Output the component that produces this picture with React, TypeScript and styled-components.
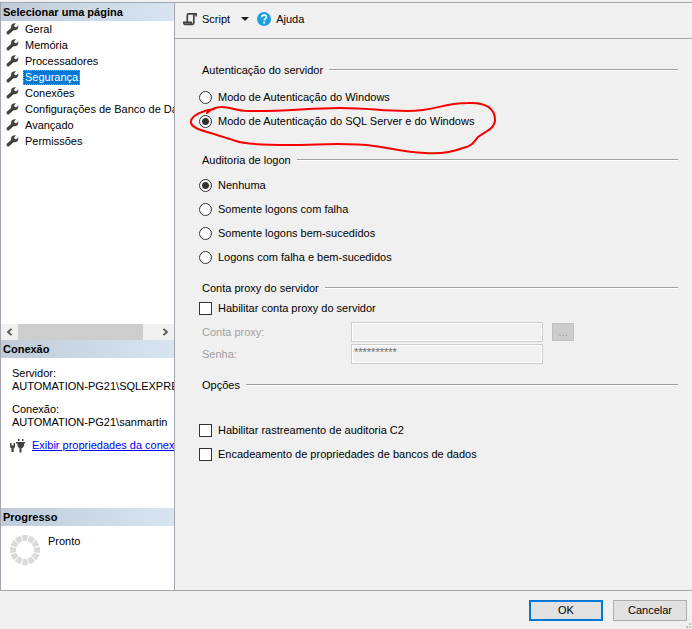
import React, { useState } from "react";
import styled, { createGlobalStyle } from "styled-components";

const Global = createGlobalStyle`
  *, *::before, *::after { box-sizing: border-box; }
  body { margin: 0; background: #f0f0f0; }
  body, button, input { font: 11px/13px "Liberation Sans", Arial, sans-serif; color: #000; }
`;

const Dialog = styled.div`
  display: flex;
  flex-direction: column;
  min-height: 100vh;
  padding-top: 2px;
`;
const Body = styled.div`
  flex: 1;
  display: grid;
  grid-template-columns: 175px minmax(0, 1fr);
  border: 1px solid #a5a5ad;
  border-width: 1px 0;
`;
const Sidebar = styled.aside`
  display: flex;
  flex-direction: column;
  min-width: 0;
  background: #fff;
  border: 1px solid #a5a5ad;
  border-width: 0 1px;
  overflow: hidden;
`;
const Panel = styled.section<{ $height?: number }>`
  display: flex;
  flex-direction: column;
  ${(p) => (p.$height ? `min-height: ${p.$height}px;` : "flex: 1;")}
`;
const PanelTitle = styled.h2`
  margin: 0;
  padding: 0 2px;
  font-size: 11px;
  line-height: 18px;
  font-weight: bold;
  background: linear-gradient(90deg, #bfcbd9, #d7e5f3);
`;
const PageList = styled.ul`
  flex: 1;
  margin: 0;
  padding: 0;
  list-style: none;
`;
const PageItem = styled.li`
  display: flex;
  align-items: center;
  gap: 4px;
  height: 16px;
  padding-left: 5px;
  svg { flex: none; }
`;
const PageButton = styled.button<{ $active: boolean }>`
  height: 15px;
  padding: 0 1px;
  border: 1px ${(p) => (p.$active ? "dotted #ff8728" : "solid transparent")};
  background: ${(p) => (p.$active ? "#0078d7" : "transparent")};
  color: ${(p) => (p.$active ? "#fff" : "#000")};
  white-space: nowrap;
`;
const ScrollBar = styled.div`
  display: grid;
  grid-template-columns: 17px 1fr 17px;
  height: 16px;
  background: #f0f0f0;
`;
const ScrollButton = styled.button`
  display: grid;
  place-items: center;
  padding: 0;
  border: 0;
  background: none;
`;
const Thumb = styled.div`
  width: 90%;
  background: #cdcdcd;
`;
const Details = styled.dl`
  margin: 0;
  padding: 9px 0 0 11px;
  white-space: nowrap;
  dt { margin-top: 10px; }
  dt:first-child { margin-top: 0; }
  dd { margin: 0; }
`;
const LinkRow = styled.div`
  display: flex;
  align-items: center;
  gap: 7px;
  padding: 9px 0 0 9px;
  white-space: nowrap;
  svg { flex: none; }
  a { color: #00f; }
`;
const Status = styled.div`
  display: flex;
  gap: 8px;
  padding: 9px 0 0 9px;
`;
const Main = styled.main`
  min-width: 0;
`;
const Toolbar = styled.div`
  display: flex;
  align-items: center;
  height: 36px;
  padding: 0 8px 3px;
  border-bottom: 1px solid #a5a5ad;
`;
const ToolButton = styled.button`
  display: flex;
  align-items: center;
  gap: 5px;
  padding: 0;
  border: 0;
  background: none;
  & + & { margin-left: 8px; }
  span + svg { margin-left: 6px; }
`;
const Form = styled.form`
  padding: 23px 14px 24px 24px;
`;
const Group = styled.fieldset<{ $before?: number; $after?: number }>`
  min-width: 0;
  margin: ${(p) => p.$before ?? 0}px 0 0;
  padding: 0;
  border: 0;
  legend { margin-bottom: ${(p) => p.$after ?? 0}px; }
`;
const Legend = styled.legend`
  display: flex;
  align-items: center;
  gap: 6px;
  width: 100%;
  height: 16px;
  padding: 0 0 0 3px;
  &::after {
    content: "";
    flex: 1;
    height: 2px;
    border-top: 1px solid #a0a0a0;
    background: #fff;
  }
`;
const Option = styled.label`
  position: relative;
  display: flex;
  align-items: center;
  gap: 6px;
  width: fit-content;
  height: 24px;
`;
const Radio = styled.input.attrs({ type: "radio" })`
  appearance: none;
  width: 13px;
  height: 13px;
  margin: 0;
  border: 1px solid #333;
  border-radius: 50%;
  background: #fff;
  &:checked { background: radial-gradient(circle, #333 0 3px, #fff 4px); }
`;
const Check = styled.input.attrs({ type: "checkbox" })`
  appearance: none;
  width: 13px;
  height: 13px;
  margin: 0;
  border: 1px solid #333;
  background: #fff;
  &:checked { box-shadow: inset 0 0 0 2px #fff; background: #333; }
`;
const Marker = styled.svg`
  position: absolute;
  left: -11px;
  top: -9px;
  pointer-events: none;
`;
const Fields = styled.div`
  display: grid;
  grid-template-columns: 149px 192px 31px;
  align-items: center;
  justify-items: start;
  gap: 2px 0;
  padding: 2px 0 0 3px;
  label { color: #a0a0a0; }
`;
const TextBox = styled.input`
  width: 100%;
  height: 20px;
  padding: 0 2px 4px;
  border: 1px solid #ccc;
  box-shadow: inset 0 0 0 1px #fff;
  background: #f0f0f0;
  color: #6d6d6d;
`;
const Browse = styled.button`
  width: 22px;
  height: 18px;
  margin-left: 9px;
  padding: 0;
  border: 1px solid #bfbfbf;
  background: #ccc;
  color: #999;
`;
const Footer = styled.footer`
  position: relative;
  display: flex;
  justify-content: flex-end;
  gap: 10px;
  padding: 9px 5px 8px;
`;
const Action = styled.button<{ $primary?: boolean }>`
  width: 74px;
  height: 21px;
  padding: 0;
  border: ${(p) => (p.$primary ? "2px solid #0078d7" : "1px solid #adadad")};
  background: #e1e1e1;
`;
const Grip = styled.svg`
  position: absolute;
  right: 0;
  bottom: 0;
`;

const Wrench = () => (
  <svg width="13" height="12" viewBox="0 0 13 12" aria-hidden="true">
    <path d="M2.200 9.800 7 5.500" stroke="#424242" strokeWidth="3.300" strokeLinecap="round" />
    <path d="M9.900.3 8.200 2.500l.3 1.500 1.700.3L12.200 2.400c.7 2.800-1.100 4.900-3.400 4.900C6.300 7.300 4.900 5.800 5 3.700 5.100 1.300 7.400-.3 9.900.3Z" fill="#424242" />
  </svg>
);
const Chevron = ({ left }: { left?: boolean }) => (
  <svg width="7" height="8" viewBox="0 0 7 8" aria-hidden="true">
    <path d={left ? "M5.500.8 2 4l3.500 3.200" : "M1.500.8 5 4 1.500 7.200"} fill="none" stroke="#555" strokeWidth="1.800" />
  </svg>
);
const Plug = () => (
  <svg width="15" height="15" viewBox="0 0 15 15" aria-hidden="true" fill="#424242">
    <path d="M0 5h1.500v2.500h2V5H5v4L3.700 10.500V14H1.500v-3.500L0 9Z" />
    <path d="M8 1h1.500v2H8zM12 1h1.500v2H12zM6 4h9v1.500h-1V8l-1.500 2h-1v4.500H9.500V10H9L7.500 8V5.500H6Z" />
  </svg>
);
const Spinner = () => (
  <svg width="30" height="30" viewBox="0 0 30 30" aria-hidden="true">
    <circle cx="15" cy="15" r="12" fill="none" stroke="#dadada" strokeWidth="6" pathLength="120" strokeDasharray="8.500 1.500" strokeDashoffset="4.250" />
  </svg>
);
const ScriptIcon = () => (
  <svg width="14" height="14" viewBox="0 0 14 14" aria-hidden="true" fill="none" stroke="#424242">
    <path d="M13.200 4.500V1.800H5.500q-1.200 0-1.200 1.500V10" strokeWidth="1.700" />
    <path d="M10.800 2v8.700q0 1.600-1.300 1.600H2q-1.200 0-1.200-1.900H8.300v1.700" strokeWidth="1.700" />
  </svg>
);
const HelpIcon = () => (
  <svg width="14" height="14" viewBox="0 0 14 14" aria-hidden="true">
    <circle cx="7" cy="7" r="7" fill="#1ba1e2" />
    <path d="M4.800 5.200c0-1.500 1-2.200 2.300-2.200s2.300.8 2.300 2c0 1.500-2.200 1.700-2.200 3.600" fill="none" stroke="#fff" strokeWidth="1.700" />
    <path d="M6.300 9.700H8v1.700H6.300z" fill="#fff" />
  </svg>
);

const pages = ["Geral", "Memória", "Processadores", "Segurança", "Conexões", "Configurações de Banco de Dados", "Avançado", "Permissões"];
const authModes = ["Modo de Autenticação do Windows", "Modo de Autenticação do SQL Server e do Windows"];
const audits = ["Nenhuma", "Somente logons com falha", "Somente logons bem-sucedidos", "Logons com falha e bem-sucedidos"];

export default function App() {
  const [page, setPage] = useState(3);
  return (
    <>
      <Global />
      <Dialog>
        <Body>
          <Sidebar>
            <Panel>
              <PanelTitle>Selecionar uma página</PanelTitle>
              <PageList>
                {pages.map((name, i) => (
                  <PageItem key={name}>
                    <Wrench />
                    <PageButton $active={i === page} onClick={() => setPage(i)}>{name}</PageButton>
                  </PageItem>
                ))}
              </PageList>
              <ScrollBar>
                <ScrollButton aria-label="Rolar para a esquerda"><Chevron left /></ScrollButton>
                <Thumb />
                <ScrollButton aria-label="Rolar para a direita"><Chevron /></ScrollButton>
              </ScrollBar>
            </Panel>
            <Panel $height={168}>
              <PanelTitle>Conexão</PanelTitle>
              <Details>
                <dt>Servidor:</dt>
                <dd>AUTOMATION-PG21\SQLEXPRESS</dd>
                <dt>Conexão:</dt>
                <dd>AUTOMATION-PG21\sanmartin</dd>
              </Details>
              <LinkRow>
                <Plug />
                <a href="#conexao">Exibir propriedades da conexão</a>
              </LinkRow>
            </Panel>
            <Panel $height={82}>
              <PanelTitle>Progresso</PanelTitle>
              <Status role="status">
                <Spinner />
                <span>Pronto</span>
              </Status>
            </Panel>
          </Sidebar>
          <Main>
            <Toolbar>
              <ToolButton>
                <ScriptIcon />
                <span>Script</span>
                <svg width="8" height="4" viewBox="0 0 8 4" aria-hidden="true"><path d="M0 0h8L4 4Z" fill="#1e1e1e" /></svg>
              </ToolButton>
              <ToolButton>
                <HelpIcon />
                <span>Ajuda</span>
              </ToolButton>
            </Toolbar>
            <Form id="security">
              <Group $after={7}>
                <Legend>Autenticação do servidor</Legend>
                {authModes.map((mode, i) => (
                  <Option key={mode}>
                    <Radio name="auth" defaultChecked={i === 1} />
                    {mode}
                    {i === 1 && (
                      <Marker width="310" height="56" viewBox="188 100 310 56" aria-hidden="true">
                        <path
                          d="M207 113C211 109 217 107 222 107C230 107 237 111 247 111C280 112 310 108 340 108C370 108 380 111 407 111C438 111 440 103 468 103C485 102 495 108 495 120C495 129 484 132 478 137C473 143 472 146 463 148C450 153 438 154 425 153C402 152 392 148 374 146C345 142 320 145 290 145C270 145 246 145 236 141C226 138 218 135 207 132C196 129 190 126 191 121C192 115 204 110 214 109"
                          fill="none"
                          stroke="#f80000"
                          strokeWidth="2"
                          strokeLinecap="round"
                        />
                      </Marker>
                    )}
                  </Option>
                ))}
              </Group>
              <Group $before={19} $after={5}>
                <Legend>Auditoria de logon</Legend>
                {audits.map((audit, i) => (
                  <Option key={audit}>
                    <Radio name="audit" defaultChecked={i === 0} />
                    {audit}
                  </Option>
                ))}
              </Group>
              <Group $before={11}>
                <Legend>Conta proxy do servidor</Legend>
                <Option><Check />Habilitar conta proxy do servidor</Option>
                <Fields>
                  <label htmlFor="proxy">Conta proxy:</label>
                  <TextBox id="proxy" disabled />
                  <Browse type="button" disabled aria-label="Procurar conta">...</Browse>
                  <label htmlFor="password">Senha:</label>
                  <TextBox id="password" disabled defaultValue="**********" />
                </Fields>
              </Group>
              <Group $before={13} $after={25}>
                <Legend>Opções</Legend>
                <Option><Check />Habilitar rastreamento de auditoria C2</Option>
                <Option><Check />Encadeamento de propriedades de bancos de dados</Option>
              </Group>
            </Form>
          </Main>
        </Body>
        <Footer>
          <Action $primary type="submit" form="security">OK</Action>
          <Action type="button">Cancelar</Action>
          <Grip width="6" height="7" viewBox="0 0 6 7" fill="#bfbfbf" aria-hidden="true">
            <path d="M3 1h2v2H3zM0 4h2v2H0zM3 4h2v2H3z" />
          </Grip>
        </Footer>
      </Dialog>
    </>
  );
}
